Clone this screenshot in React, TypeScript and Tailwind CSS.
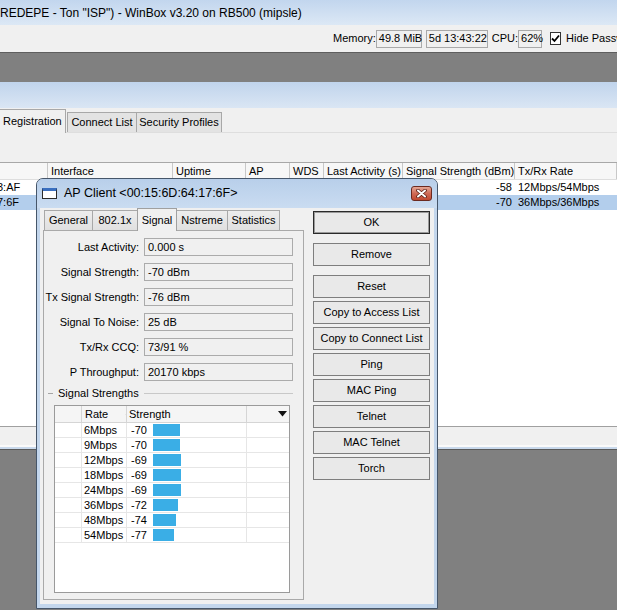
import React from 'react'

const FIELDS: [string, string][] = [
  ['Last Activity:', '0.000 s'],
  ['Signal Strength:', '-70 dBm'],
  ['Tx Signal Strength:', '-76 dBm'],
  ['Signal To Noise:', '25 dB'],
  ['Tx/Rx CCQ:', '73/91 %'],
  ['P Throughput:', '20170 kbps'],
]

// rate, dBm, bar width in px
const RATES: [string, number, number][] = [
  ['6Mbps', -70, 27],
  ['9Mbps', -70, 27],
  ['12Mbps', -69, 28],
  ['18Mbps', -69, 28],
  ['24Mbps', -69, 28],
  ['36Mbps', -72, 25],
  ['48Mbps', -74, 23],
  ['54Mbps', -77, 21],
]

const BUTTONS = [
  'Copy to Access List',
  'Copy to Connect List',
  'Ping',
  'MAC Ping',
  'Telnet',
  'MAC Telnet',
  'Torch',
]

const DIALOG_TABS: [string, string][] = [
  ['General', 'w-[49px]'],
  ['802.1x', 'w-[46px]'],
  ['Signal', 'w-[40px]'],
  ['Nstreme', 'w-[52px]'],
  ['Statistics', 'w-[53px]'],
]

function StatBox({ children, w }: { children: React.ReactNode; w: string }) {
  return (
    <div className={`${w} h-[18px] flex items-center pl-[2px] border border-[#a9a9a9] bg-[#f0f0f0]`}>
      {children}
    </div>
  )
}

function Btn({ label, primary }: { label: string; primary?: boolean }) {
  return (
    <div
      className={`h-[23px] flex items-center justify-center bg-[#e9e9e9] border ${
        primary ? 'border-[#2a2a2a] shadow-[inset_0_0_0_1px_#9a9a9a]' : 'border-[#7e7e7e]'
      }`}
    >
      {label}
    </div>
  )
}

function ApClientDialog() {
  return (
    <div className="absolute left-[36px] top-[178px] w-[402px] h-[431px] border border-[#46566a] rounded-t-[7px] bg-[#c3d6ec] flex flex-col">
      {/* title bar */}
      <div className="h-[29px] flex items-center pl-[5px] pr-[5px] rounded-t-[6px] bg-gradient-to-b from-[#b8cfea] to-[#cadcf1]">
        <div className="w-[15px] h-[11px] border border-[#2b2b2b] border-t-[3px] border-t-[#3a6fbf] bg-white" />
        <span className="ml-[7px] text-[12.5px]">AP Client &lt;00:15:6D:64:17:6F&gt;</span>
        <div className="ml-auto w-[21px] h-[15px] rounded-[3px] border border-[#6b2a20] bg-gradient-to-b from-[#e4a796] via-[#cf6a55] to-[#c0472f] flex items-center justify-center">
          <svg width="11" height="9" viewBox="0 0 11 9">
            <path d="M2 1.5 L9 7.5 M9 1.5 L2 7.5" stroke="#5a1e14" strokeWidth="3.6" strokeLinecap="round" />
            <path d="M2 1.5 L9 7.5 M9 1.5 L2 7.5" stroke="#ffffff" strokeWidth="2" strokeLinecap="round" />
          </svg>
        </div>
      </div>

      {/* client */}
      <div className="mx-[3px] h-[396px] bg-[#f0f0f0] flex">
        {/* tabs + panel */}
        <div className="ml-[3px] w-[261px] flex flex-col">
          <div className="h-[22px] flex items-end pl-[1px]">
            {DIALOG_TABS.map(([t, w]) =>
              t === 'Signal' ? (
                <div
                  key={t}
                  className={`${w} relative top-[1px] h-[23px] -mr-[1px] flex items-center justify-center border border-b-0 border-[#a0a0a0] bg-[#f0f0f0] z-10`}
                >
                  {t}
                </div>
              ) : (
                <div
                  key={t}
                  className={`${w} h-[20px] -mr-[1px] flex items-center justify-center border border-b-0 border-[#a8a8a8] bg-gradient-to-b from-[#ededed] to-[#e0e0e0]`}
                >
                  {t}
                </div>
              )
            )}
          </div>
          <div className="h-[370px] border border-[#a9a9a9] flex flex-col pt-[7px]">
            <div className="flex flex-col gap-[7px]">
              {FIELDS.map(([label, value]) => (
                <div key={label} className="flex items-center">
                  <div className="w-[95px] text-right">{label}</div>
                  <div className="ml-[5px] w-[149px] h-[18px] flex items-center pl-[3px] border border-[#ababab] bg-[#f0f0f0]">
                    {value}
                  </div>
                </div>
              ))}
            </div>

            {/* group */}
            <div className="mt-[5px] h-[14px] flex items-center">
              <div className="ml-[4px] w-[5px] h-px bg-[#a5a5a5]" />
              <span className="ml-[5px]">Signal Strengths</span>
              <div className="ml-[5px] mr-[10px] flex-1 h-px bg-[#c8c8c8]" />
            </div>

            <div className="ml-[10px] mt-[5px] w-[236px] h-[188px] border border-[#9a9a9a] bg-white flex flex-col">
              <div className="h-[17px] grid grid-cols-[27px_45px_120px_1fr] bg-[#f5f5f5] border-b border-[#d5d5d5]">
                <div className="border-r border-[#d5d5d5]" />
                <div className="border-r border-[#d5d5d5] flex items-center pl-[3px]">
                  <span>Rate</span>
                  <svg className="ml-[17px]" width="4" height="7" viewBox="0 0 4 7">
                    <path d="M0.5 6.5 L3.5 0.5" stroke="#a8a8a8" strokeWidth="1" />
                  </svg>
                </div>
                <div className="border-r border-[#d5d5d5] flex items-center pl-[2px]">Strength</div>
                <div className="flex items-center justify-end pr-[2px]">
                  <svg width="9" height="6" viewBox="0 0 9 6">
                    <path d="M0 0 H9 L4.5 5.5 Z" fill="#111" />
                  </svg>
                </div>
              </div>
              {RATES.map(([rate, dbm, bar]) => (
                <div key={rate} className="h-[15px] grid grid-cols-[27px_45px_120px_1fr] border-b border-[#e6e6e6]">
                  <div className="border-r border-[#e6e6e6]" />
                  <div className="border-r border-[#e6e6e6] flex items-center pl-[2px]">{rate}</div>
                  <div className="border-r border-[#e6e6e6] flex items-center pl-[4px]">
                    <span className="w-[22px]">{dbm}</span>
                    <div className="h-[12px] bg-[#3aaee6]" style={{ width: bar }} />
                  </div>
                  <div />
                </div>
              ))}
            </div>
          </div>
        </div>

        {/* buttons */}
        <div className="ml-[9px] w-[117px] pt-[3px] flex flex-col">
          <Btn label="OK" primary />
          <div className="mt-[9px]">
            <Btn label="Remove" />
          </div>
          <div className="mt-[9px] flex flex-col gap-[3px]">
            <Btn label="Reset" />
            {BUTTONS.map((b) => (
              <Btn key={b} label={b} />
            ))}
          </div>
        </div>
      </div>
    </div>
  )
}

export default function App() {
  const headCols = ['', 'Interface', 'Uptime', 'AP', 'WDS', 'Last Activity (s)', 'Signal Strength (dBm)', 'Tx/Rx Rate']
  const grid = 'grid grid-cols-[48px_125px_73px_44px_34px_79px_112px_1fr]'

  return (
    <div className="relative w-[617px] h-[610px] overflow-hidden bg-[#808080] font-['Liberation_Sans',Arial,sans-serif] text-[11px] text-black leading-none">
      <div className="flex flex-col h-full">
        {/* WinBox title bar */}
        <div className="h-[25px] flex items-center whitespace-nowrap text-[12px] bg-gradient-to-b from-[#c2d6ee] to-[#dce8f5]">
          REDEPE - Ton "ISP") - WinBox v3.20 on RB500 (mipsle)
        </div>

        {/* toolbar */}
        <div className="h-[28px] flex items-center pl-[333px] whitespace-nowrap bg-[#f0f0f0] border-b border-[#5e5e5e]">
          <span>Memory:</span>
          <StatBox w="w-[46px]">49.8 MiB</StatBox>
          <div className="ml-[4px]">
            <StatBox w="w-[62px]">5d 13:43:22</StatBox>
          </div>
          <span className="ml-[4px]">CPU:</span>
          <StatBox w="w-[24px]">62%</StatBox>
          <div className="ml-[8px] w-[13px] h-[13px] border border-[#333] bg-white flex items-center justify-center">
            <svg width="9" height="9" viewBox="0 0 9 9">
              <path d="M1 4.5 L3.5 7 L8 1.5" stroke="#000" strokeWidth="1.8" fill="none" />
            </svg>
          </div>
          <span className="ml-[5px]">Hide Passwords</span>
        </div>

        <div className="h-[29px]" />

        {/* wireless tables window */}
        <div className="h-[26px] bg-gradient-to-b from-[#c0d4ec] to-[#dae6f4]" />
        <div className="h-[25px] bg-[#f0f0f0] flex items-end border-b border-[#dedede]">
          <div className="relative top-[1px] w-[66px] h-[24px] pl-[3px] flex items-center border-r border-t border-[#a8a8a8] bg-[#f0f0f0]">
            Registration
          </div>
          <div className="ml-[1px] w-[70px] h-[20px] flex items-center justify-center border border-b-0 border-[#a8a8a8] bg-[#e3e3e3]">
            Connect List
          </div>
          <div className="-ml-[1px] w-[86px] h-[20px] flex items-center justify-center border border-b-0 border-[#a8a8a8] bg-[#e3e3e3]">
            Security Profiles
          </div>
        </div>
        <div className="h-[29px] bg-[#f0f0f0]" />

        <div className={`${grid} h-[18px] bg-[#f7f7f7] border-t border-[#a8a8a8] border-b border-b-[#dedede] whitespace-nowrap`}>
          {headCols.map((c, i) => (
            <div key={i} className="flex items-center pl-[3px] border-r border-[#c8c8c8] overflow-hidden">
              {c}
            </div>
          ))}
        </div>
        <div className={`${grid} h-[15px] bg-white whitespace-nowrap`}>
          <div className="flex items-center -ml-[3px]">3:AF</div>
          <div />
          <div />
          <div />
          <div />
          <div />
          <div className="flex items-center justify-end pr-[3px]">-58</div>
          <div className="flex items-center pl-[3px]">12Mbps/54Mbps</div>
        </div>
        <div className={`${grid} h-[15px] bg-[#b3ceec] whitespace-nowrap`}>
          <div className="flex items-center -ml-[3px]">7:6F</div>
          <div />
          <div />
          <div />
          <div />
          <div />
          <div className="flex items-center justify-end pr-[3px]">-70</div>
          <div className="flex items-center pl-[3px]">36Mbps/36Mbps</div>
        </div>
        <div className="h-[216px] bg-white" />
        <div className="h-[19px] bg-[#f0f0f0] border-t border-[#a0a0a0]" />
        <div className="h-[2px] bg-[#fafafa]" />
        <div className="h-[3px] bg-[#c9d9ec] border-b border-[#5a5a5a]" />
      </div>

      <ApClientDialog />
    </div>
  )
}
